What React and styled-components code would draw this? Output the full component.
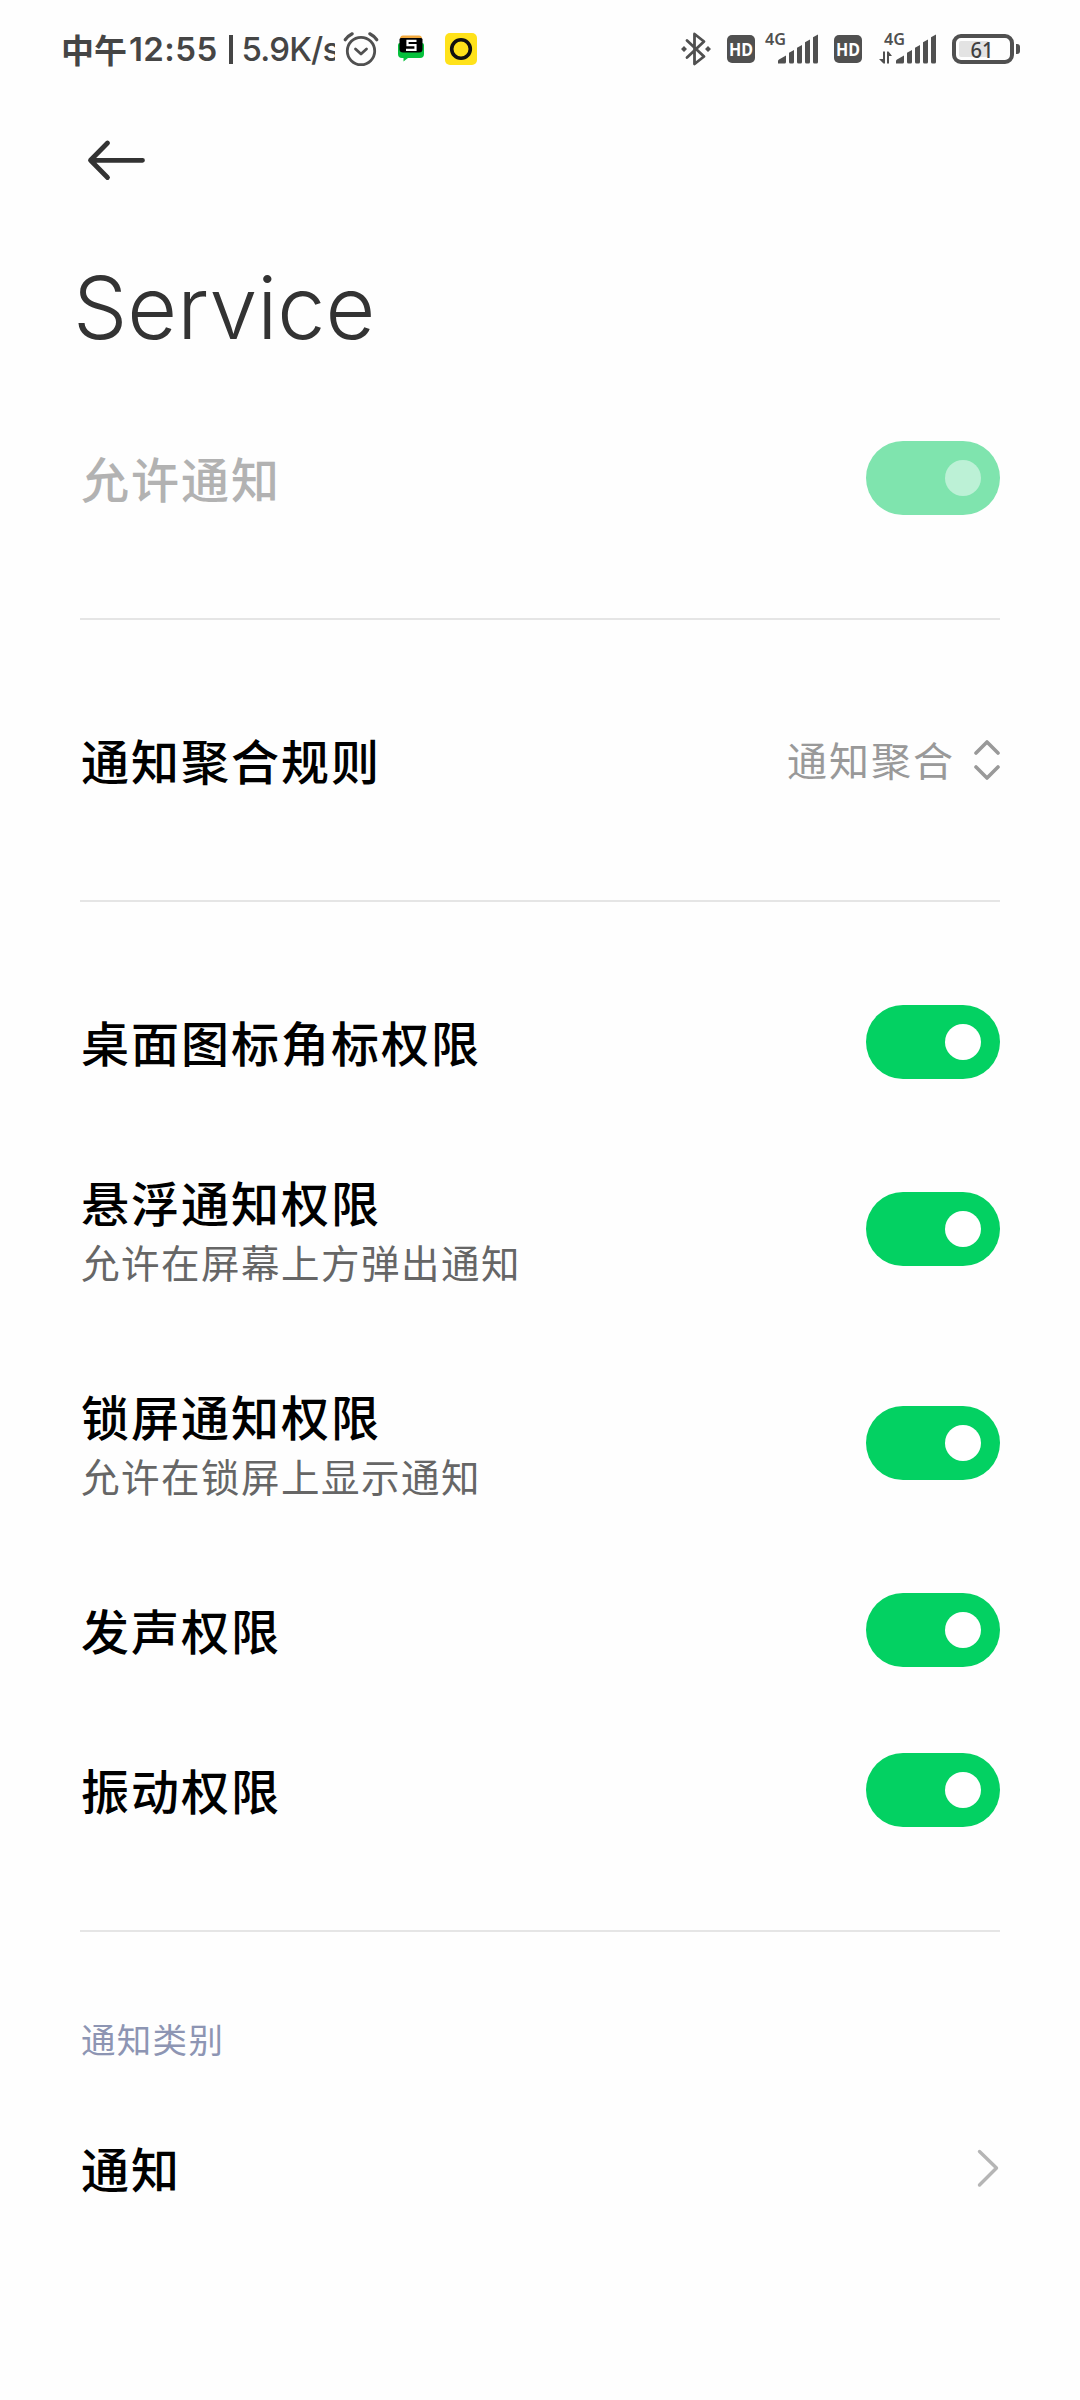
import React from "react";
import styled, { createGlobalStyle } from "styled-components";

const GlobalStyle = createGlobalStyle`
  body {
    margin: 0;
    background: #fefefe;
    font-family: "Noto Sans CJK SC", sans-serif;
  }
`;

const INK = "#505050";

const Screen = styled.div`
  width: 1080px;
  height: 2400px;
  background: #fefefe;
  overflow: hidden;
`;

const StatusBar = styled.header`
  display: flex;
  align-items: center;
  justify-content: space-between;
  height: 98px;
  padding: 0 60px 0 61px;
  box-sizing: border-box;
`;

const StatusGroup = styled.div`
  display: flex;
  align-items: center;
  svg {
    display: block;
    flex: none;
    overflow: visible;
  }
`;

const Clock = styled.div`
  display: flex;
  align-items: center;
  width: 274px;
  height: 50px;
  line-height: 50px;
  overflow: hidden;
  white-space: nowrap;
  color: #454545;
`;

const ClockPart = styled.span`
  font-family: ${(p) => (p.$cjk ? '"Noto Sans CJK SC"' : '"Inter"')}, sans-serif;
  font-size: ${(p) => p.$size || 33}px;
  font-weight: ${(p) => p.$weight || 600};
  letter-spacing: ${(p) => p.$spacing || 0}px;
  margin-left: ${(p) => p.$gap || 0}px;
`;

const ClockBar = styled.span`
  flex: none;
  width: 4px;
  height: 29px;
  margin-left: 11px;
  background: #454545;
`;

const IconSlot = styled.span`
  display: block;
  margin-left: ${(p) => p.$gap}px;
`;

const NavBar = styled.nav`
  display: flex;
  align-items: center;
  height: 124px;
  padding-left: 85px;
  svg {
    display: block;
  }
`;

const Title = styled.h1`
  margin: 0;
  height: 176px;
  padding-left: 73px;
  font-family: "Inter", sans-serif;
  font-weight: 300;
  font-size: 86px;
  line-height: 172px;
  color: #333;
`;

const List = styled.main`
  padding: 0 80px;
`;

const Row = styled.div`
  display: flex;
  align-items: center;
  justify-content: space-between;
  height: ${(p) => (p.$tall ? 214 : 160)}px;
`;

const Labels = styled.div`
  display: flex;
  flex-direction: column;
  padding-left: 1px;
  padding-top: ${(p) => (p.$pair ? 2 : 0)}px;
  padding-bottom: ${(p) => (p.$pair ? 0 : 2)}px;
`;

const Label = styled.span`
  font-size: 48px;
  line-height: 62px;
  font-weight: 500;
  letter-spacing: 2px;
  color: ${(p) => (p.$disabled ? "#b2b2b2" : "#000")};
`;

const Hint = styled.span`
  font-size: 38.5px;
  line-height: 58px;
  letter-spacing: 1.5px;
  color: #666;
`;

const Switch = styled.span`
  display: flex;
  align-items: center;
  justify-content: flex-end;
  width: 134px;
  height: 74px;
  padding-right: 19px;
  box-sizing: border-box;
  border-radius: 37px;
  background: ${(p) => (p.$disabled ? "#7fe4ae" : "#03d162")};
`;

const Knob = styled.span`
  width: 36px;
  height: 36px;
  border-radius: 50%;
  background: ${(p) => (p.$disabled ? "#bcf1d6" : "#fff")};
`;

const Divider = styled.hr`
  height: 2px;
  margin: 60px 0;
  border: 0;
  background: #e5e5e5;
`;

const Value = styled.span`
  display: flex;
  align-items: center;
  gap: 19px;
  font-size: 40px;
  line-height: 60px;
  letter-spacing: 2px;
  color: #999;
  svg {
    display: block;
  }
`;

const ValueText = styled.span`
  padding-bottom: 3px;
`;

const Category = styled.h2`
  margin: 0;
  height: 96px;
  padding-left: 1px;
  line-height: 92px;
  font-size: 34.5px;
  font-weight: 400;
  letter-spacing: 1.3px;
  color: #8d95b3;
`;

const AlarmIcon = () => (
  <svg width="36" height="36" viewBox="0 0 36 36" fill="none" stroke={INK} strokeLinecap="round">
    <circle cx="18" cy="20" r="13.7" strokeWidth="2.8" />
    <path d="M12.5 18l5.5 5 5.5-5" strokeWidth="2.8" strokeLinejoin="round" />
    <path d="M2.2 8.8Q5.2 4.8 9.2 2.8M33.8 8.8Q30.800 4.800 26.800 2.800" strokeWidth="3.2" />
  </svg>
);

const ChatIcon = () => (
  <svg width="26" height="28" viewBox="0 0 26 28">
    <path d="M0 10q0-2 2-2h22q2 0 2 2v9q0 4-4 4H10l-4.500 3.500V23H4q-4 0-4-4z" fill="#06c13c" />
    <path d="M2 4q0-3.500 3-3.500h16q3 0 3 3.500z" fill="#f2a83c" />
    <path d="M1.500 4.500q0-1.500 1.500-1.500h20q1.500 0 1.500 1.500V14q0 3.500-3.500 3.500H5q-3.500 0-3.500-3.500z" fill="#000" />
    <path d="M18.500 5.800H9.500v4.400h8v4.600H8" fill="none" stroke="#fff" strokeWidth="2.200" />
  </svg>
);

const RingIcon = () => (
  <svg width="32" height="32" viewBox="0 0 32 32">
    <rect width="32" height="32" rx="5" fill="#ffe21a" />
    <circle cx="16" cy="16" r="9.300" fill="none" stroke="#111" strokeWidth="3.600" />
  </svg>
);

const BluetoothIcon = () => (
  <svg width="30" height="36" viewBox="0 0 30 36" fill="none" stroke={INK} strokeWidth="2.800" strokeLinejoin="round" strokeLinecap="round">
    <path d="M6 9.500L23 25.500 13.500 33V3L23 10.500 6 26.500" />
    <path d="M3 15l3 3-3 3-3-3zM27 15l3 3-3 3-3-3z" fill={INK} stroke="none" />
  </svg>
);

const HdIcon = () => (
  <svg width="28" height="28" viewBox="0 0 28 28">
    <rect width="28" height="28" rx="5" fill={INK} />
    <text x="14" y="20.500" textAnchor="middle" textLength="24" lengthAdjust="spacingAndGlyphs" fontFamily="Noto Sans, sans-serif" fontWeight="700" fontSize="17" fill="#fff">HD</text>
  </svg>
);

const SignalIcon = ({ data }) => (
  <svg width="58" height="32" viewBox="0 0 58 32" fill={INK}>
    <text x={data ? 5 : 0} y="12" textLength="21" lengthAdjust="spacingAndGlyphs" fontFamily="Noto Sans, sans-serif" fontWeight="600" fontSize="15.500">4G</text>
    {data && <path d="M4 18.500h2V30.500H4.500L0 26h4zM8 30.500V18.500h1.500L13 23h-3v7.500z" />}
    <g transform={data ? "translate(4 0)" : undefined}>
      <path d="M13 30.500V28q0-1 1-1.500l7-4V29q0 1.500-1.500 1.500z" />
      <path d="M24 19.700l5-2.700V29q0 1.500-1.500 1.500h-2Q24 30.500 24 29z" />
      <path d="M32 14.700l5-2.700V29q0 1.500-1.500 1.500h-2Q32 30.500 32 29z" />
      <path d="M40 9.200l5-2.700V29q0 1.500-1.500 1.500h-2Q40 30.500 40 29z" />
      <path d="M48 4.200l5-2.700V29q0 1.500-1.500 1.500h-2Q48 30.500 48 29z" />
    </g>
  </svg>
);

const BatteryIcon = () => (
  <svg width="68" height="30" viewBox="0 0 68 30">
    <rect x="2" y="2" width="58" height="26" rx="7" fill="none" stroke={INK} strokeWidth="4" />
    <rect x="7" y="7" width="30" height="16" rx="2" fill="#e3e3e3" />
    <path d="M64 10h1q3 0 3 3v4q0 3-3 3h-1z" fill={INK} />
    <text x="30" y="23.500" textAnchor="middle" textLength="23" lengthAdjust="spacingAndGlyphs" fontFamily="Noto Sans, sans-serif" fontWeight="500" fontSize="22" fill="#404040">61</text>
  </svg>
);

const BackIcon = () => (
  <svg width="60" height="44" viewBox="0 0 60 44" fill="none" stroke="#333" strokeWidth="4.800" strokeLinecap="round" strokeLinejoin="round">
    <path d="M57.500 22.300H5.500M22.500 5L5.500 22.300 22.500 39.500" />
  </svg>
);

const SelectIcon = () => (
  <svg width="26" height="42" viewBox="0 0 26 42" fill="none" stroke="#999" strokeWidth="3.600" strokeLinecap="round" strokeLinejoin="round">
    <path d="M2 14L13 3l11 11M2 28l11 11 11-11" />
  </svg>
);

const ChevronIcon = () => (
  <svg width="24" height="40" viewBox="0 0 24 40" fill="none" stroke="#b5b5b5" strokeWidth="3.400" strokeLinecap="round" strokeLinejoin="round">
    <path d="M3.500 3.500L20.500 20 3.500 37" />
  </svg>
);

const SwitchRow = ({ label, hint, disabled }) => (
  <Row $tall={Boolean(hint)}>
    <Labels $pair={Boolean(hint)}>
      <Label $disabled={disabled}>{label}</Label>
      {hint && <Hint>{hint}</Hint>}
    </Labels>
    <Switch $disabled={disabled} role="switch" aria-checked="true">
      <Knob $disabled={disabled} />
    </Switch>
  </Row>
);

const permissions = [
  { label: "桌面图标角标权限" },
  { label: "悬浮通知权限", hint: "允许在屏幕上方弹出通知" },
  { label: "锁屏通知权限", hint: "允许在锁屏上显示通知" },
  { label: "发声权限" },
  { label: "振动权限" },
];

export default function App() {
  return (
    <Screen>
      <GlobalStyle />
      <StatusBar>
        <StatusGroup>
          <Clock>
            <ClockPart $cjk $size={33} $weight={700}>中午</ClockPart>
            <ClockPart $gap={2} $spacing={0.4}>12:55</ClockPart>
            <ClockBar />
            <ClockPart $gap={9} $weight={500} $spacing={-0.8}>5.9K/s</ClockPart>
          </Clock>
          <IconSlot $gap={8}><AlarmIcon /></IconSlot>
          <IconSlot $gap={19}><ChatIcon /></IconSlot>
          <IconSlot $gap={21}><RingIcon /></IconSlot>
        </StatusGroup>
        <StatusGroup>
          <IconSlot $gap={0}><BluetoothIcon /></IconSlot>
          <IconSlot $gap={16}><HdIcon /></IconSlot>
          <IconSlot $gap={10}><SignalIcon /></IconSlot>
          <IconSlot $gap={11}><HdIcon /></IconSlot>
          <IconSlot $gap={17}><SignalIcon data /></IconSlot>
          <IconSlot $gap={15}><BatteryIcon /></IconSlot>
        </StatusGroup>
      </StatusBar>
      <NavBar><BackIcon /></NavBar>
      <Title>Service</Title>
      <List>
        <SwitchRow label="允许通知" disabled />
        <Divider />
        <Row>
          <Labels><Label>通知聚合规则</Label></Labels>
          <Value>
            <ValueText>通知聚合</ValueText>
            <SelectIcon />
          </Value>
        </Row>
        <Divider />
        {permissions.map((p) => <SwitchRow key={p.label} {...p} />)}
        <Divider />
        <Category>通知类别</Category>
        <Row>
          <Labels><Label>通知</Label></Labels>
          <ChevronIcon />
        </Row>
      </List>
    </Screen>
  );
}
